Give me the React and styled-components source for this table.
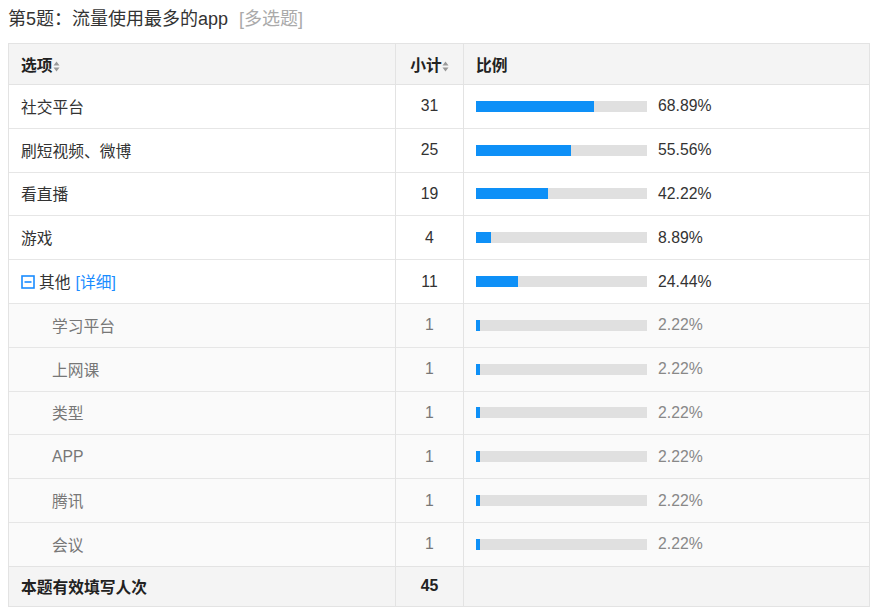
import React from 'react';
import styled, { createGlobalStyle } from 'styled-components';

const GlobalStyle = createGlobalStyle`
  body {
    margin: 0;
    padding: 0;
    background: #fff;
    font-family: "Liberation Sans", Arial, "Noto Sans CJK SC", sans-serif;
    color: #333;
  }
`;

const Page = styled.div`
  padding: 8px 8px 0 8px;
  width: 861px;
`;

const Title = styled.div`
  font-size: 18px;
  line-height: 24px;
  color: #333;
  height: 36px;
  margin-top: -1px;

  span {
    color: #aaa;
    margin-left: 11px;
  }
`;

const Table = styled.table`
  width: 861px;
  border-collapse: collapse;
  table-layout: fixed;
  font-size: 15.75px;
  border: 1px solid #e3e3e3;
`;

const HeadCell = styled.th`
  height: 40px;
  padding: 0 12px;
  background: #f4f4f4;
  font-weight: bold;
  color: #222;
  text-align: ${(p) => (p.center ? 'center' : 'left')};
  border: 1px solid #e3e3e3;
  white-space: nowrap;
`;

const Row = styled.tr`
  background: ${(p) => (p.sub ? '#fafafa' : '#fff')};
  color: ${(p) => (p.sub ? '#777' : '#333')};
`;

const Cell = styled.td`
  height: 42.8px;
  padding: 0 12px 0 ${(p) => (p.indent ? '43px' : '12px')};
  text-align: ${(p) => (p.center ? 'center' : 'left')};
  border-top: 1px solid #e6e6e6;
  border-left: 1px solid #e3e3e3;
  border-right: 1px solid #e3e3e3;
  white-space: nowrap;
`;

const FootCell = styled.td`
  height: 39px;
  padding: 0 12px;
  background: #f4f4f4;
  font-weight: bold;
  color: #222;
  text-align: ${(p) => (p.center ? 'center' : 'left')};
  border-top: 1px solid #e3e3e3;
  border-right: 1px solid #e3e3e3;
`;

const BarWrap = styled.div`
  display: flex;
  align-items: center;
  gap: 11px;
`;

const Track = styled.div`
  width: 171px;
  height: 11px;
  background: #e0e0e0;
`;

const Fill = styled.div`
  height: 100%;
  background: #0e90f7;
`;

const Pct = styled.span`
  color: ${(p) => (p.sub ? '#888' : '#333')};
`;

const Toggle = styled.span`
  display: inline-flex;
  align-items: center;
  gap: 4px;
  vertical-align: middle;
`;

const Link = styled.span`
  color: #1a8cff;
  margin-left: 1px;
`;

const SortIcon = () => (
  <svg width="7" height="11" viewBox="0 0 7 11" style={{ verticalAlign: -1 }}>
    <path d="M3.5 0.5 L6.5 4.5 L0.5 4.5 Z" fill="#999" />
    <path d="M3.5 10.5 L6.5 6.5 L0.5 6.5 Z" fill="#999" />
  </svg>
);

const MinusBox = () => (
  <svg width="14" height="14" viewBox="0 0 14 14">
    <rect x="1" y="1" width="12" height="12" fill="none" stroke="#1a8cff" strokeWidth="1.6" />
    <rect x="3.5" y="6.2" width="7" height="1.6" fill="#1a8cff" />
  </svg>
);

const rows = [
  { name: '社交平台', count: 31, pct: 68.89 },
  { name: '刷短视频、微博', count: 25, pct: 55.56 },
  { name: '看直播', count: 19, pct: 42.22 },
  { name: '游戏', count: 4, pct: 8.89 },
  { name: '其他', count: 11, pct: 24.44, other: true },
  { name: '学习平台', count: 1, pct: 2.22, sub: true },
  { name: '上网课', count: 1, pct: 2.22, sub: true },
  { name: '类型', count: 1, pct: 2.22, sub: true },
  { name: 'APP', count: 1, pct: 2.22, sub: true },
  { name: '腾讯', count: 1, pct: 2.22, sub: true },
  { name: '会议', count: 1, pct: 2.22, sub: true },
];

export default function App() {
  return (
    <Page>
      <GlobalStyle />
      <Title>
        第5题：流量使用最多的app<span>[多选题]</span>
      </Title>
      <Table>
        <colgroup>
          <col style={{ width: 387 }} />
          <col style={{ width: 68 }} />
          <col style={{ width: 406 }} />
        </colgroup>
        <thead>
          <tr>
            <HeadCell>
              选项<SortIcon />
            </HeadCell>
            <HeadCell center>
              小计<SortIcon />
            </HeadCell>
            <HeadCell>比例</HeadCell>
          </tr>
        </thead>
        <tbody>
          {rows.map((r) => (
            <Row key={r.name} sub={r.sub}>
              <Cell indent={r.sub}>
                {r.other ? (
                  <Toggle>
                    <MinusBox />
                    {r.name}
                    <Link>[详细]</Link>
                  </Toggle>
                ) : (
                  r.name
                )}
              </Cell>
              <Cell center>{r.count}</Cell>
              <Cell>
                <BarWrap>
                  <Track>
                    <Fill style={{ width: `${Math.max(r.pct, 2.5)}%` }} />
                  </Track>
                  <Pct sub={r.sub}>{r.pct.toFixed(2)}%</Pct>
                </BarWrap>
              </Cell>
            </Row>
          ))}
          <tr>
            <FootCell>本题有效填写人次</FootCell>
            <FootCell center>45</FootCell>
            <FootCell />
          </tr>
        </tbody>
      </Table>
    </Page>
  );
}
